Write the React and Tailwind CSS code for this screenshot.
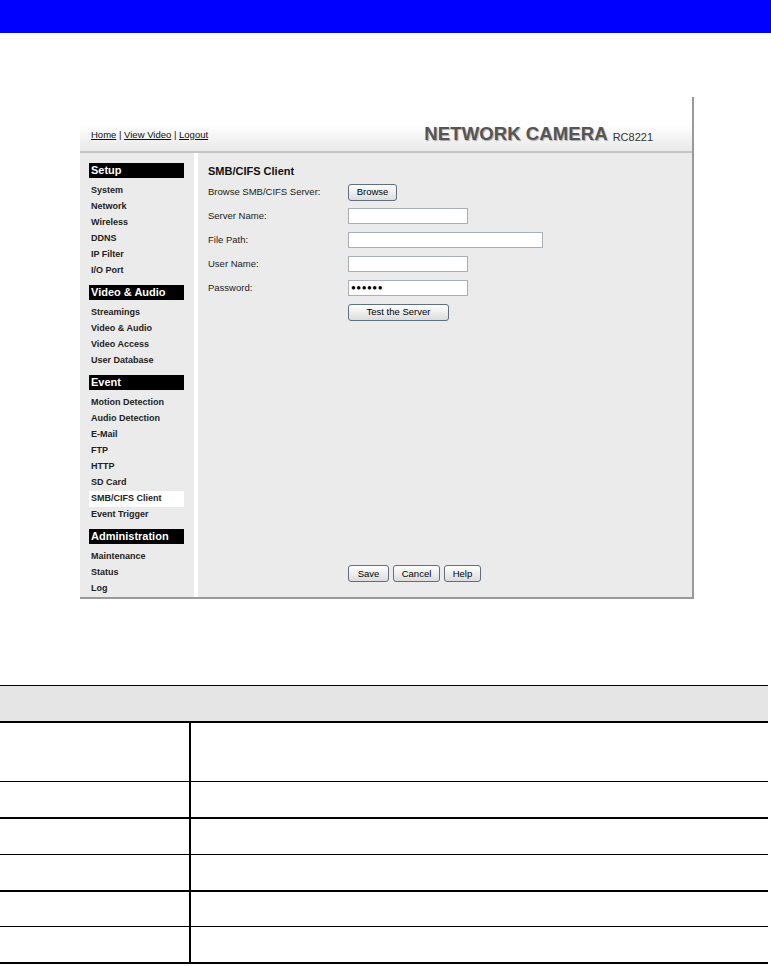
import React from 'react';

const menu = [
  { title: 'Setup', items: ['System', 'Network', 'Wireless', 'DDNS', 'IP Filter', 'I/O Port'] },
  { title: 'Video & Audio', items: ['Streamings', 'Video & Audio', 'Video Access', 'User Database'] },
  {
    title: 'Event',
    items: ['Motion Detection', 'Audio Detection', 'E-Mail', 'FTP', 'HTTP', 'SD Card', 'SMB/CIFS Client', 'Event Trigger'],
  },
  { title: 'Administration', items: ['Maintenance', 'Status', 'Log'] },
];

const fields = [
  { label: 'Server Name:', width: 'w-[120px]' },
  { label: 'File Path:', width: 'w-[195px]' },
  { label: 'User Name:', width: 'w-[120px]' },
];

const Btn = ({ children, className = '' }) => (
  <button
    className={`h-[17px] rounded-[3px] border border-[#5f6f80] bg-gradient-to-b from-white to-[#dcdcdc] text-[9.5px] leading-none text-black ${className}`}
  >
    {children}
  </button>
);

// heights include the bottom border
const rows = [
  { h: 'h-[59px]', b: 'border-b' },
  { h: 'h-[37px]', b: 'border-b-2' },
  { h: 'h-[36px]', b: 'border-b' },
  { h: 'h-[37px]', b: 'border-b-2' },
  { h: 'h-[35px]', b: 'border-b' },
  { h: 'h-[37px]', b: 'border-b-2' },
];

export default function App() {
  return (
    <div className="min-h-[966px] bg-white font-['Liberation_Sans',Arial,sans-serif]">
      <div className="h-[33px] bg-[#0000ff]" />

      {/* Screenshot of the camera web page */}
      <div className="ml-[80px] mt-[64px] w-[614px] border-b-2 border-r-2 border-[#9a9a9a] bg-[#ebebeb]">
        <div className="flex h-[56px] items-end justify-between border-b-2 border-[#c4c4c4] bg-gradient-to-b from-white via-white to-[#e9e9e9] pb-[8px] pl-[11px] pr-[39px]">
          <div className="mb-[1px] text-[9.5px] text-[#111]">
            <span className="underline">Home</span> | <span className="underline">View Video</span> |{' '}
            <span className="underline">Logout</span>
          </div>
          <div className="flex items-end gap-[5px]">
            <span className="text-[18.5px] font-bold leading-none tracking-[0.1px] text-[#555] [text-shadow:1px_1px_1px_#aaa]">
              NETWORK CAMERA
            </span>
            <span className="text-[11px] leading-none text-[#333]">RC8221</span>
          </div>
        </div>

        <div className="flex">
          <div className="w-[114px] pt-[10px]">
            {menu.map((sec, i) => (
              <div key={sec.title} className={i > 0 ? 'mt-[6px]' : ''}>
                <div className="ml-[9px] flex h-[15px] w-[95px] items-center bg-black pl-[2px] text-[11px] font-bold text-white">
                  {sec.title}
                </div>
                <div className="mt-[5px]">
                  {sec.items.map((it) => (
                    <div
                      key={it}
                      className={`ml-[9px] flex h-[16px] w-[95px] items-center pl-[2px] text-[9px] font-bold text-[#222] ${
                        it === 'SMB/CIFS Client' ? 'bg-white' : ''
                      }`}
                    >
                      {it}
                    </div>
                  ))}
                </div>
              </div>
            ))}
          </div>
          <div className="w-[4px] bg-white" />
          <div className="flex flex-1 flex-col pl-[10px] pt-[11px] text-[9.5px] text-[#222]">
            <div className="text-[11px] font-bold leading-[14px] text-[#111]">SMB/CIFS Client</div>
            <div className="mt-[6px] flex h-[16px] items-center">
              <div className="w-[140px]">Browse SMB/CIFS Server:</div>
              <Btn className="w-[49px]">Browse</Btn>
            </div>
            {fields.map((f) => (
              <div key={f.label} className="mt-[8px] flex h-[16px] items-center">
                <div className="w-[140px]">{f.label}</div>
                <div className={`h-[16px] ${f.width} border border-[#a9b0b8] bg-white`} />
              </div>
            ))}
            <div className="mt-[8px] flex h-[16px] items-center">
              <div className="w-[140px]">Password:</div>
              <div className="flex h-[16px] w-[120px] items-center border border-[#a9b0b8] bg-white pl-[2px] text-[8px] tracking-[0.5px] text-black">
                ●●●●●●
              </div>
            </div>
            <div className="mt-[8px] flex h-[16px] items-center pl-[140px]">
              <Btn className="w-[101px]">Test the Server</Btn>
            </div>
            <div className="mt-auto flex gap-[4px] pb-[15px] pl-[140px]">
              <Btn className="w-[41px]">Save</Btn>
              <Btn className="w-[47px]">Cancel</Btn>
              <Btn className="w-[37px]">Help</Btn>
            </div>
          </div>
        </div>
      </div>

      {/* Table */}
      <div className="mt-[86px] w-[768px] border-t border-black">
        <div className="h-[37px] border-b-2 border-black bg-[#e5e5e5]" />
        {rows.map((r, i) => (
          <div key={i} className={`flex ${r.h} ${r.b} border-black`}>
            <div className="w-[191px] border-r-2 border-black" />
            <div className="flex-1" />
          </div>
        ))}
      </div>
    </div>
  );
}
